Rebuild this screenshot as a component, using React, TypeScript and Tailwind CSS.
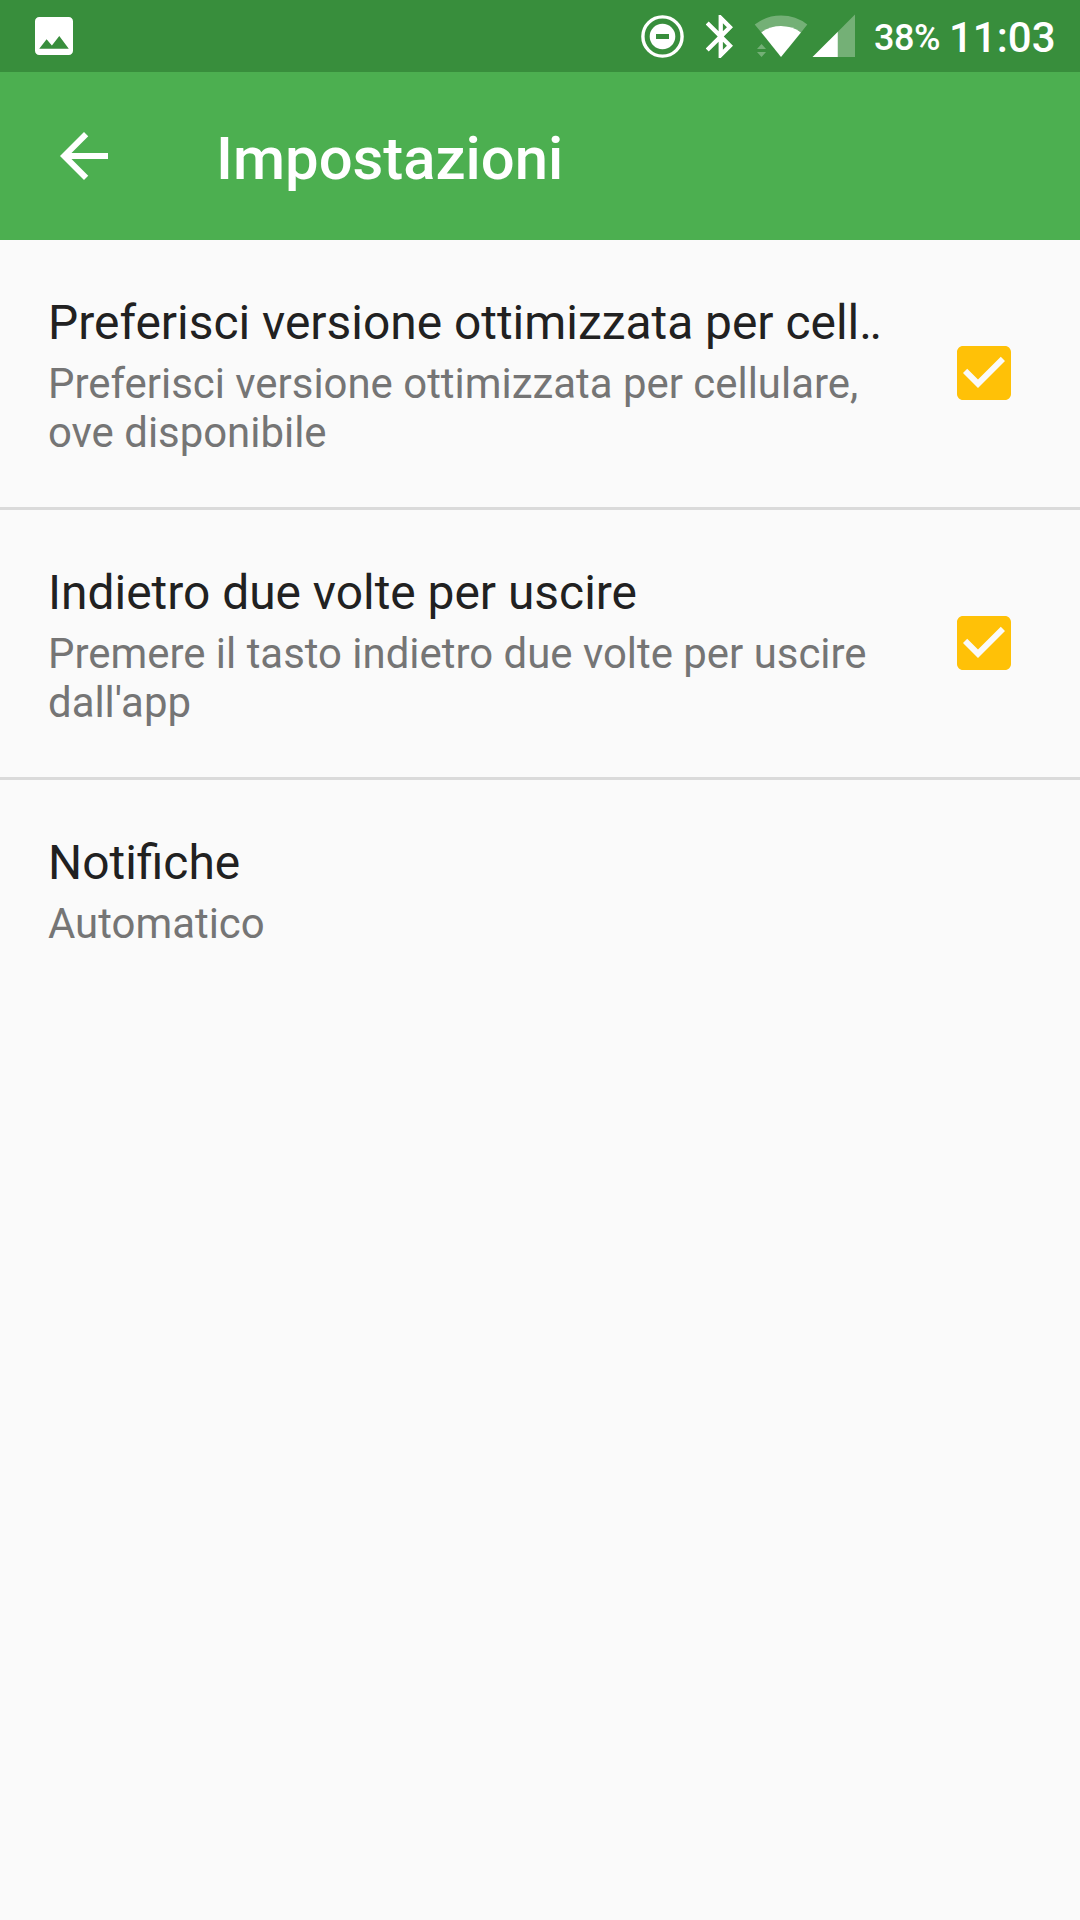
import React from "react";

function StatusIcons() {
  return (
    <svg className="h-[72px] w-[226px] shrink-0" viewBox="640 0 226 72" fill="white">
      <circle cx="662.5" cy="36.5" r="19.6" fill="none" stroke="white" strokeWidth="3.4" />
      <path fillRule="evenodd" d="M662.5 23.7a12.8 12.8 0 1 0 0 25.6a12.8 12.8 0 1 0 0-25.6zM656 34h13v5h-13z" />
      <svg x="705.7" y="15" width="27.3" height="43" viewBox="5 2 12.71 20">
        <path d="M17.71 7.71L12 2h-1v7.59L6.41 5 5 6.41 10.59 12 5 17.59 6.41 19 11 14.41V22h1l5.71-5.71-4.3-4.29 4.3-4.29zM13 5.83l1.88 1.88L13 9.59V5.83zm1.88 10.46L13 18.17v-3.76l1.88 1.88z" />
      </svg>
      <path fillOpacity=".3" d="M754.7 24.6Q766 15.6 781 15.6T807.3 24.6L801 32.4Q792.5 26 781 26T761.3 32.4z" />
      <path d="M781 57L761.3 32.4Q769.5 26 781 26T801 32.4z" />
      <path fillOpacity=".3" d="M757 49h9l-4.5-5zM757 52h9l-4.5 5z" />
      <path fillOpacity=".3" d="M837.8 31.7L855 14.5V57H837.8z" />
      <path d="M812.5 57L837.8 31.7V57z" />
    </svg>
  );
}

function Check() {
  return (
    <svg className="mr-[60px] h-[72px] w-[72px] shrink-0" viewBox="0 0 24 24">
      <path fill="#ffc107" d="M19 3H5c-1.11 0-2 .9-2 2v14c0 1.1.89 2 2 2h14c1.11 0 2-.9 2-2V5c0-1.1-.89-2-2-2zm-9 14l-5-5 1.41-1.41L10 14.17l7.59-7.59L19 8l-9 9z" />
    </svg>
  );
}

function Row({ title, lines, checked, last }: { title: string; lines: string[]; checked?: boolean; last?: boolean }) {
  return (
    <div className={"flex h-[270px] items-start pl-12 " + (last ? "" : "border-b-[3px] border-[#dadada]")}>
      <div className="flex-1 whitespace-nowrap pt-[55px]">
        <div className="text-[47.9px] leading-[56px] text-[#212121]">{title}</div>
        <div className="pt-2 text-[41.92px] leading-[49px] text-[#757575]">
          {lines.map((l) => <div key={l}>{l}</div>)}
        </div>
      </div>
      {checked && <div className="pt-[97px]"><Check /></div>}
    </div>
  );
}

export default function App() {
  return (
    <div className="h-[1920px] w-[1080px] overflow-hidden bg-[#fafafa] font-['Roboto',sans-serif]">
      <div className="flex h-[72px] items-center bg-[#388e3c] text-white">
        <svg className="ml-[35px] h-[38px] w-[38px]" viewBox="3 3 18 18"><path fill="white" d="M21 19V5c0-1.1-.9-2-2-2H5c-1.1 0-2 .9-2 2v14c0 1.1.9 2 2 2h14c1.1 0 2-.9 2-2zM8.5 13.5l2.5 3.01L14.5 12l4.5 6H5l3.5-4.5z" /></svg>
        <div className="ml-auto w-[226px] shrink-0"><StatusIcons /></div>
        <div className="w-[82px] shrink-0 pl-2 pt-[3px] text-[36px] font-medium leading-none tracking-[-0.5px]">38%</div>
        <div className="w-[132px] shrink-0 pl-[1px] pt-[2px] text-[42px] font-medium leading-[49px]">11:03</div>
      </div>
      <div className="flex h-[168px] items-center bg-[#4caf50] text-white">
        <svg className="ml-12 h-[72px] w-[72px]" viewBox="0 0 24 24"><path fill="white" d="M20 11H7.83l5.59-5.59L12 4l-8 8 8 8 1.41-1.41L7.83 13H20v-2z" /></svg>
        <div className="pl-24 pt-2 text-[59.8px] font-medium">Impostazioni</div>
      </div>
      <Row title="Preferisci versione ottimizzata per cell‥" lines={["Preferisci versione ottimizzata per cellulare,", "ove disponibile"]} checked />
      <Row title="Indietro due volte per uscire" lines={["Premere il tasto indietro due volte per uscire", "dall'app"]} checked />
      <Row title="Notifiche" lines={["Automatico"]} last />
    </div>
  );
}
